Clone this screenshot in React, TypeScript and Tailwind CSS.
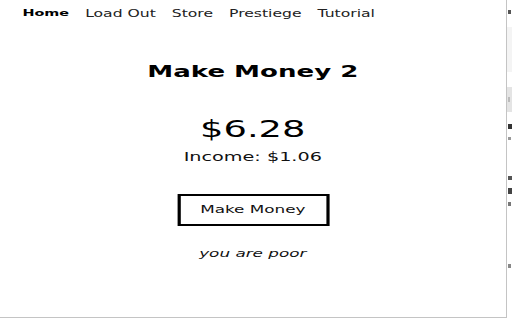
import React from "react";

const NAV = ["Home", "Load Out", "Store", "Prestiege", "Tutorial"];

// bits of the page that peeks out behind the popup on the right
function PageEdge() {
  return (
    <div className="flex flex-1 flex-col bg-white">
      <div className="h-[10px]" />
      <div className="ml-[1px] h-[4px] w-[3px] bg-[#555]" />
      <div className="h-[13px]" />
      <div className="h-[45px] bg-[#f4f4f4]" />
      <div className="h-[15px]" />
      <div className="flex h-[25px] items-center bg-[#e4e4e4]">
        <div className="ml-[1px] h-[5px] w-[2px] bg-[#bbb]" />
      </div>
      <div className="h-[12px]" />
      <div className="ml-[1px] h-[5px] w-[4px] bg-[#333]" />
      <div className="h-[8px]" />
      <div className="ml-[1px] h-[3px] w-[3px] bg-[#999]" />
      <div className="h-[36px]" />
      <div className="ml-[1px] h-[4px] w-[4px] bg-[#555]" />
      <div className="h-[8px]" />
      <div className="ml-[1px] h-[6px] w-[4px] bg-[#444]" />
      <div className="h-[8px]" />
      <div className="ml-[1px] h-[4px] w-[3px] bg-[#777]" />
      <div className="h-[58px]" />
      <div className="ml-[1px] h-[4px] w-[3px] bg-[#888]" />
    </div>
  );
}

export default function App() {
  return (
    <div className="flex h-[320px] w-[512px] overflow-hidden bg-white font-['DejaVu_Sans',sans-serif] text-black">
      <div className="h-[318px] w-[507px] shrink-0 overflow-hidden border-b border-r border-[#c4c4c4]">
        {/* the capture is stretched sideways, so the content is laid out narrow and widened */}
        <div className="w-[316px] origin-left scale-x-[1.6]">
          <nav className="flex h-[28px] items-center gap-[10px] pl-[14px] text-[9.75px]">
            {NAV.map((item, i) => (
              <a key={item} className={i === 0 ? "text-[9px] font-bold text-black" : "text-[#222]"}>
                {item}
              </a>
            ))}
          </nav>

          <div className="flex flex-col items-center">
            <h1 className="mt-[34px] text-[16.3px] leading-[20px] font-bold">Make Money 2</h1>
            <p className="mt-[33px] text-[23px] leading-[28px]">$6.28</p>
            <p className="mt-[6px] text-[12px] leading-[16px] text-[#111]">Income: $1.06</p>
            <button className="mt-[29px] h-[32px] w-[95px] border-2 border-black text-[10.5px] text-[#111]">
              Make Money
            </button>
            <p className="mt-[20px] text-[10.5px] leading-[14px] italic text-[#111]">you are poor</p>
          </div>
        </div>
      </div>
      <PageEdge />
    </div>
  );
}
